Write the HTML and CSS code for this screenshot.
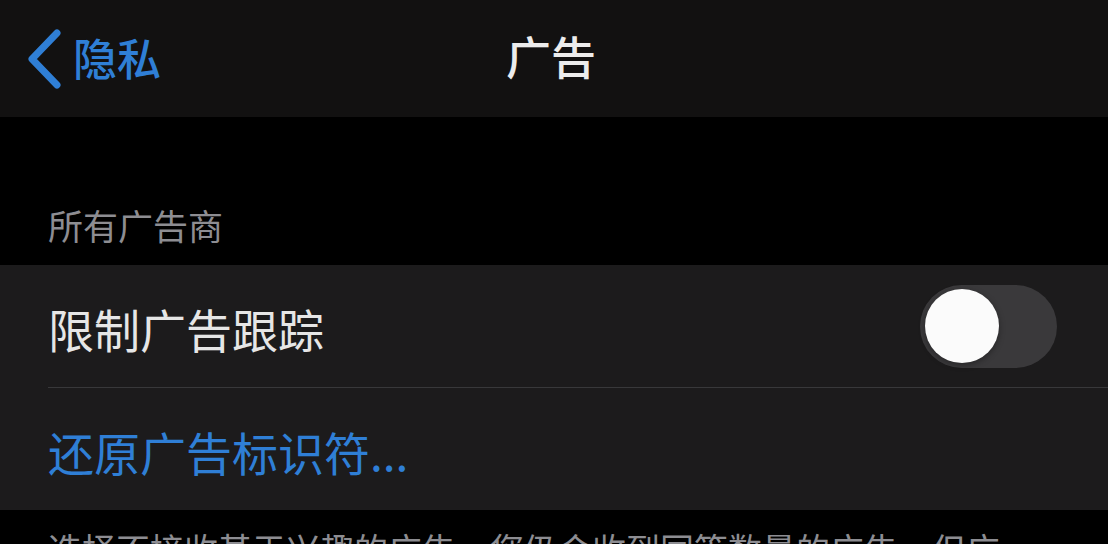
FILE: index.html
```html
<!DOCTYPE html>
<html lang="zh-CN">
<head>
<meta charset="utf-8">
<link rel="stylesheet" href="styles.css">
</head>
<body>
<div class="screen">
  <header class="nav">
    <div class="nav-left">
      <svg class="chev" viewBox="0 0 40 60" width="40" height="60"><polyline points="33,4 8,30 33,56" fill="none" stroke="#2f7fd6" stroke-width="7" stroke-linecap="round" stroke-linejoin="round"/></svg>
      <span class="back-label">隐私</span>
    </div>
    <div class="nav-title">广告</div>
    <div class="nav-right"></div>
  </header>
  <div class="section-head">所有广告商</div>
  <div class="group">
    <div class="row">
      <span class="row-label">限制广告跟踪</span>
      <span class="toggle"><span class="knob"></span></span>
    </div>
    <div class="row link-row">
      <span class="row-link">还原广告标识符...</span>
    </div>
  </div>
  <p class="footer-note">选择不接收基于兴趣的广告，您仍会收到同等数量的广告，但广告可能与您的兴趣不太相关。</p>
</div>
</body>
</html>
```

FILE: styles.css
```css
html, body {
  margin: 0;
  padding: 0;
  background: #000;
}
.screen {
  width: 1108px;
  height: 544px;
  overflow: hidden;
  font-family: "Noto Sans CJK SC", "Noto Sans", sans-serif;
  background: #000;
}
.nav {
  height: 117px;
  background: #121111;
  display: grid;
  grid-template-columns: 1fr auto 1fr;
  align-items: center;
}
.nav-left {
  display: flex;
  align-items: center;
  padding-left: 24px;
  gap: 9px;
}
.chev {
  display: block;
}
.back-label {
  color: #2f7fd6;
  font-size: 44px;
  line-height: 1;
  font-weight: 500;
  margin-top: -3px;
}
.nav-title {
  color: #ececec;
  font-size: 45px;
  font-weight: 500;
  line-height: 1;
  margin-top: -7px;
  margin-left: -6px;
}
.section-head {
  height: 148px;
  box-sizing: border-box;
  display: flex;
  align-items: flex-end;
  padding: 0 0 23px 48px;
  color: #8d8d92;
  font-size: 35px;
  line-height: 1;
}
.group {
  background: #1c1b1c;
}
.row {
  height: 122px;
  display: flex;
  align-items: center;
  justify-content: space-between;
  margin-left: 48px;
  padding-right: 51px;
  border-bottom: 1px solid #38383a;
}
.link-row {
  border-bottom: none;
}
.row-label {
  color: #e6e6e6;
  font-size: 46px;
  line-height: 1;
  margin-top: 4px;
}
.row-link {
  color: #2f7fd6;
  font-size: 46px;
  line-height: 1;
  margin-top: 4px;
}
.toggle {
  width: 137px;
  height: 83px;
  border-radius: 42px;
  background: #3a393b;
  display: flex;
  align-items: center;
  padding-left: 5px;
  box-sizing: border-box;
}
.knob {
  width: 74px;
  height: 74px;
  border-radius: 50%;
  background: #fbfbfb;
  box-shadow: 0 2px 6px rgba(0,0,0,0.35);
}
.footer-note {
  margin: 0;
  padding: 14px 90px 0 48px;
  color: #8d8d92;
  font-size: 34px;
  line-height: 1.45;
}
```
